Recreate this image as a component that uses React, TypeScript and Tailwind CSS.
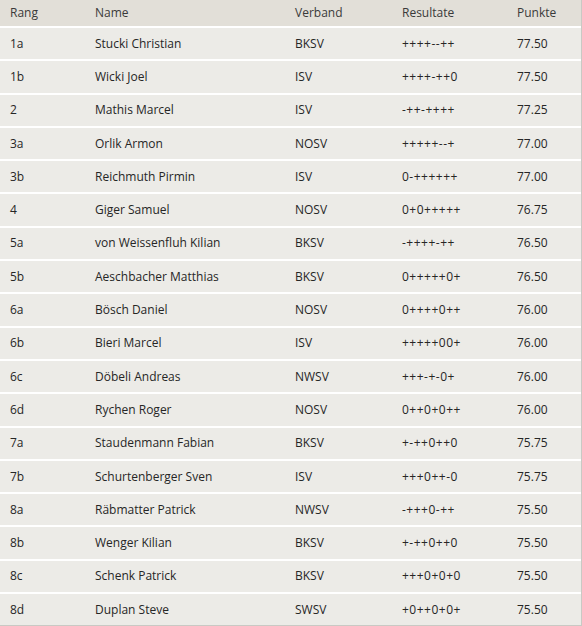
const rows: [string, string, string, string, string][] = [
  ["1a", "Stucki Christian", "BKSV", "++++--++", "77.50"],
  ["1b", "Wicki Joel", "ISV", "++++-++0", "77.50"],
  ["2", "Mathis Marcel", "ISV", "-++-++++", "77.25"],
  ["3a", "Orlik Armon", "NOSV", "+++++--+", "77.00"],
  ["3b", "Reichmuth Pirmin", "ISV", "0-++++++", "77.00"],
  ["4", "Giger Samuel", "NOSV", "0+0+++++", "76.75"],
  ["5a", "von Weissenfluh Kilian", "BKSV", "-++++-++", "76.50"],
  ["5b", "Aeschbacher Matthias", "BKSV", "0+++++0+", "76.50"],
  ["6a", "Bösch Daniel", "NOSV", "0++++0++", "76.00"],
  ["6b", "Bieri Marcel", "ISV", "+++++00+", "76.00"],
  ["6c", "Döbeli Andreas", "NWSV", "+++-+-0+", "76.00"],
  ["6d", "Rychen Roger", "NOSV", "0++0+0++", "76.00"],
  ["7a", "Staudenmann Fabian", "BKSV", "+-++0++0", "75.75"],
  ["7b", "Schurtenberger Sven", "ISV", "+++0++-0", "75.75"],
  ["8a", "Räbmatter Patrick", "NWSV", "-+++0-++", "75.50"],
  ["8b", "Wenger Kilian", "BKSV", "+-++0++0", "75.50"],
  ["8c", "Schenk Patrick", "BKSV", "+++0+0+0", "75.50"],
  ["8d", "Duplan Steve", "SWSV", "+0++0+0+", "75.50"],
];

const cols = "grid grid-cols-[85px_200px_107px_115px_1fr] px-[10px] items-center";

export default function App() {
  return (
    <div className="w-[582px] h-[626px] bg-white overflow-hidden font-['Open_Sans',sans-serif] text-[12px] font-medium text-[#262626]">
      <div className="border-r border-b border-[#c9c9c4] h-[626px] bg-[#ecebe7]">
        <div className={`${cols} h-[26px] bg-[#e2dfd8] text-[#3a3a3a]`}>
          <div>Rang</div>
          <div>Name</div>
          <div>Verband</div>
          <div>Resultate</div>
          <div>Punkte</div>
        </div>
        {rows.map((r) => (
          <div key={r[0]} className={`${cols} h-[33.3px] border-t-2 border-white`}>
            <div>{r[0]}</div>
            <div>{r[1]}</div>
            <div>{r[2]}</div>
            <div className="tracking-[0.5px]">{r[3]}</div>
            <div>{r[4]}</div>
          </div>
        ))}
      </div>
    </div>
  );
}
